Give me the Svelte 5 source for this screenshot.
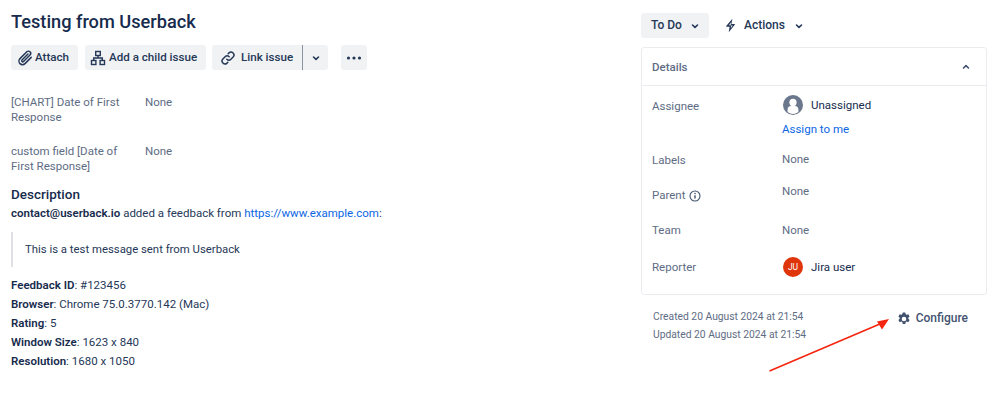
<script>
  const details = [
    { label: 'Labels', cls: 'labels' },
    { label: 'Parent', cls: 'parent', info: true },
    { label: 'Team', cls: 'team' }
  ];
  const meta = [
    ['Feedback ID', ': #123456'],
    ['Browser', ': Chrome 75.0.3770.142 (Mac)'],
    ['Rating', ': 5'],
    ['Window Size', ': 1623 x 840'],
    ['Resolution', ': 1680 x 1050']
  ];
</script>

<div class="page">
  <main class="left">
    <h1>Testing from Userback</h1>
    <div class="toolbar">
      <button class="btn attach">
        <svg width="16" height="16" viewBox="0 0 16 16" fill="none" stroke="#253858" stroke-width="1.5" stroke-linecap="round"><path d="M14.200 7.400 8 13.600a3.500 3.500 0 0 1-5-5l6.800-6.800a2.200 2.200 0 0 1 3.200 3.200L6.500 11.500a1 1 0 0 1-1.500-1.500L11 4"/></svg>
        Attach
      </button>
      <button class="btn child">
        <svg width="16" height="16" viewBox="0 0 16 16" fill="none" stroke="#253858" stroke-width="1.400"><rect x="5.700" y="1.500" width="4.600" height="4"/><rect x="1.500" y="10.500" width="4.400" height="4"/><rect x="10.100" y="10.500" width="4.400" height="4"/><path d="M8 5.500V8M3.700 10.500V8h8.600v2.500"/></svg>
        Add a child issue
      </button>
      <div class="split">
        <button class="btn link">
          <svg width="16" height="16" viewBox="0 0 16 16" fill="none" stroke="#253858" stroke-width="1.500" stroke-linecap="round"><path d="M6.800 9.200a2.900 2.900 0 0 0 4.100 0l2.200-2.200a2.900 2.900 0 0 0-4.100-4.100L8.200 3.700"/><path d="M9.200 6.800a2.900 2.900 0 0 0-4.100 0L2.900 9a2.900 2.900 0 0 0 4.100 4.100l.8-.8"/></svg>
          Link issue
        </button>
        <button class="btn caret" aria-label="More link options">
          <svg width="10" height="10" viewBox="0 0 10 10" fill="none" stroke="#253858" stroke-width="1.600" stroke-linecap="round" stroke-linejoin="round"><path d="M2.500 4 5 6.400 7.500 4"/></svg>
        </button>
      </div>
      <button class="btn more" aria-label="More">
        <svg width="16" height="4" viewBox="0 0 16 4" fill="#253858"><circle cx="2.500" cy="2" r="1.600"/><circle cx="8" cy="2" r="1.600"/><circle cx="13.500" cy="2" r="1.600"/></svg>
      </button>
    </div>

    <div class="field first">
      <div class="field-label">[CHART] Date of First Response</div>
      <div class="field-value">None</div>
    </div>
    <div class="field second">
      <div class="field-label">custom field [Date of First Response]</div>
      <div class="field-value">None</div>
    </div>

    <h2>Description</h2>
    <p class="intro"><strong>contact@userback.io</strong> added a feedback from <a href="#top">https://www.example.com</a>:</p>
    <blockquote>This is a test message sent from Userback</blockquote>
    <div class="meta">
      {#each meta as [k, v]}
        <div><strong>{k}</strong>{v}</div>
      {/each}
    </div>
  </main>

  <aside class="right">
    <div class="actions">
      <button class="btn todo">
        To Do
        <svg width="10" height="10" viewBox="0 0 10 10" fill="none" stroke="#253858" stroke-width="1.600" stroke-linecap="round" stroke-linejoin="round"><path d="M2.500 4 5 6.400 7.500 4"/></svg>
      </button>
      <button class="btn plain">
        <svg width="12" height="15" viewBox="0 0 12 15" fill="#253858"><path d="M7.400.7 1.200 8.100c-.2.300 0 .7.400.7h3l-.9 5.400 6.100-7.500c.3-.3 0-.7-.3-.7H6.400zM6 4.400 5.600 7.500h2.200L5.900 10l.4-2.700H3.900z" fill-rule="evenodd"/></svg>
        Actions
        <svg class="gap" width="10" height="10" viewBox="0 0 10 10" fill="none" stroke="#253858" stroke-width="1.600" stroke-linecap="round" stroke-linejoin="round"><path d="M2.500 4 5 6.400 7.500 4"/></svg>
      </button>
    </div>

    <section class="card">
      <header>
        <span>Details</span>
        <svg width="10" height="10" viewBox="0 0 10 10" fill="none" stroke="#42526e" stroke-width="1.600" stroke-linecap="round" stroke-linejoin="round"><path d="M2.500 6 5 3.600 7.500 6"/></svg>
      </header>
      <div class="rows">
        <div class="row assignee">
          <div class="label">Assignee</div>
          <div class="value">
            <div class="person">
              <svg width="20" height="20" viewBox="0 0 20 20"><circle cx="10" cy="10" r="10" fill="#6b778c"/><circle cx="10" cy="7.400" r="3.600" fill="#fff"/><path d="M4.600 17v-2.600c0-2 1.500-3.300 3.300-3.300h4.200c1.800 0 3.300 1.300 3.300 3.300V17a9 9 0 0 1-10.800 0z" fill="#fff"/></svg>
              <span>Unassigned</span>
            </div>
            <a href="#top" class="assign">Assign to me</a>
          </div>
        </div>
        {#each details as d}
          <div class="row {d.cls}">
            <div class="label">
              {d.label}
              {#if d.info}
                <svg width="12" height="12" viewBox="0 0 12 12" fill="none" stroke="#42526e" stroke-width="1.100"><circle cx="6" cy="6" r="5"/><path d="M6 5.300v3.200" stroke-width="1.400"/><circle cx="6" cy="3.500" r=".8" fill="#42526e" stroke="none"/></svg>
              {/if}
            </div>
            <div class="value none">None</div>
          </div>
        {/each}
        <div class="row reporter">
          <div class="label">Reporter</div>
          <div class="value">
            <div class="person">
              <div class="avatar">JU</div>
              <span>Jira user</span>
            </div>
          </div>
        </div>
      </div>
    </section>

    <div class="footer">
      <div class="dates">
        <div>Created 20 August 2024 at 21:54</div>
        <div>Updated 20 August 2024 at 21:54</div>
      </div>
      <div class="configure">
        <svg width="14" height="14" viewBox="0 0 14 14"><path fill="#42526e" fill-rule="evenodd" d="M5.700.5h2.600l.4 1.800c.3.100.6.300.9.500l1.700-.6 1.300 2.300-1.300 1.200a4 4 0 0 1 0 1l1.300 1.200-1.300 2.300-1.700-.6c-.3.200-.6.400-.9.500l-.4 1.800H5.700l-.4-1.800c-.3-.1-.6-.3-.9-.5l-1.700.6-1.300-2.300 1.300-1.200a4 4 0 0 1 0-1L1.400 4.500l1.300-2.300 1.700.6c.3-.2.600-.4.900-.5zM7 4.700a2.300 2.300 0 1 0 0 4.600 2.300 2.300 0 0 0 0-4.600z"/></svg>
        Configure
      </div>
    </div>
  </aside>

  <svg class="arrow" width="130" height="64" viewBox="0 0 130 64" fill="none">
    <path d="M.5 60 112 12.500" stroke="#f5260f" stroke-width="1.600"/>
    <path d="M120 8 108 10.500 113 18.500z" fill="#f5260f"/>
  </svg>
</div>

<style>
  :global(body) {
    margin: 0;
    background: #fff;
    font-family: Roboto, "Noto Sans", sans-serif;
    color: #172b4d;
  }
  * { box-sizing: border-box; }
  .page {
    position: relative;
    width: 999px;
    height: 409px;
    overflow: hidden;
    display: flex;
    justify-content: space-between;
    padding: 0 12px 0 11px;
    font-size: 11.500px;
    line-height: 19px;
  }
  .left { width: 400px; }
  h1 {
    margin: 10px 0 0;
    font-size: 18.200px;
    line-height: 24px;
    font-weight: 500;
    color: #172b4d;
  }
  .toolbar {
    display: flex;
    gap: 7px;
    margin-top: 11px;
  }
  button {
    font: inherit;
    border: 0;
    cursor: pointer;
  }
  .btn {
    display: flex;
    align-items: center;
    gap: 3px;
    height: 25px;
    padding: 0 6px;
    background: #f1f2f4;
    border-radius: 3px;
    color: #253858;
    font-weight: 500;
    font-size: 11.600px;
    white-space: nowrap;
  }
  .attach { width: 67px; gap: 2px; }
  .btn.child { width: 121px; padding: 0 5px; gap: 3px; }
  .split { display: flex; gap: 0; margin-left: -1px; }
  .link { width: 91px; border-radius: 3px 0 0 3px; padding: 0 8px 0 8px; gap: 5px; border-right: 1px solid #8993a4; }
  .caret { border-radius: 0 3px 3px 0; width: 25px; justify-content: center; padding: 0; }
  .more { margin-left: 6px; width: 26px; justify-content: center; padding: 0; }
  .field {
    display: grid;
    grid-template-columns: 134px 1fr;
    color: #5e6c84;
    line-height: 15px;
  }
  .field-label { width: 122px; color: #5e6c84; }
  .first { margin-top: 25px; }
  .second { margin-top: 19px; }
  h2 {
    margin: 10px 0 0;
    font-size: 13.500px;
    line-height: 20px;
    font-weight: 500;
    color: #172b4d;
  }
  p.intro { margin: 0; white-space: nowrap; color: #253858; }
  strong { font-weight: 600; color: #172b4d; }
  a { color: #0c66e4; text-decoration: none; }
  blockquote {
    margin: 9px 0 0;
    height: 35px;
    border-left: 2px solid #dfe1e6;
    padding: 8px 0 0 12px;
    white-space: nowrap;
    color: #253858;
    font-size: 11.350px;
  }
  .meta { margin-top: 9px; color: #253858; }
  .right {
    width: 346px;
    margin-left: auto;
  }
  .actions {
    display: flex;
    gap: 8px;
    margin-top: 13px;
  }
  .btn.todo { width: 68px; padding: 0 9px 0 10px; justify-content: space-between; font-weight: 500; font-size: 12px; }
  .btn.plain { background: transparent; gap: 7px; padding: 0 6px 0 8px; font-size: 12px; }
  .plain .gap { margin-left: 2px; }
  .card {
    margin-top: 9px;
    border: 1px solid #ebecf0;
    border-radius: 3px;
    height: 248px;
  }
  header {
    display: flex;
    justify-content: space-between;
    align-items: center;
    height: 38px;
    padding: 1px 15px 0 10px;
    border-bottom: 1px solid #ebecf0;
    color: #5e6c84;
    font-weight: 500;
  }
  .rows { padding: 0 10px; }
  .row { display: grid; grid-template-columns: 130px 1fr; }
  .label { color: #5e6c84; display: flex; align-items: center; gap: 4px; height: 19px; }
  .value { color: #172b4d; }
  .none { color: #5e6c84; }
  .assignee { padding-top: 9px; }
  .assignee .label { margin-top: 2px; }
  .person { display: flex; align-items: center; gap: 8px; height: 20px; margin-left: 1px; }
  .assign { display: block; margin-top: 5px; line-height: 19px; }
  .labels { margin-top: 11px; }
  .labels .label { margin-top: 1px; }
  .parent { margin-top: 12px; }
  .parent .label { margin-top: 4px; }
  .team { margin-top: 16px; }
  .reporter { margin-top: 17px; }
  .reporter .label { margin-top: 1px; }
  .avatar {
    width: 20px;
    height: 20px;
    border-radius: 50%;
    background: #de350b;
    color: #fff;
    font-size: 8.500px;
    line-height: 20px;
    text-align: center;
  }
  .footer {
    display: flex;
    justify-content: space-between;
    padding: 12px 19px 0 12px;
  }
  .dates { font-size: 10.300px; line-height: 18px; color: #5e6c84; padding-top: 1px; }
  .configure {
    display: flex;
    align-items: center;
    gap: 5px;
    color: #42526e;
    font-weight: 500;
    font-size: 12px;
    height: 19px;
    margin-top: 2px;
  }
  .arrow {
    position: absolute;
    left: 769px;
    top: 311px;
  }
</style>
